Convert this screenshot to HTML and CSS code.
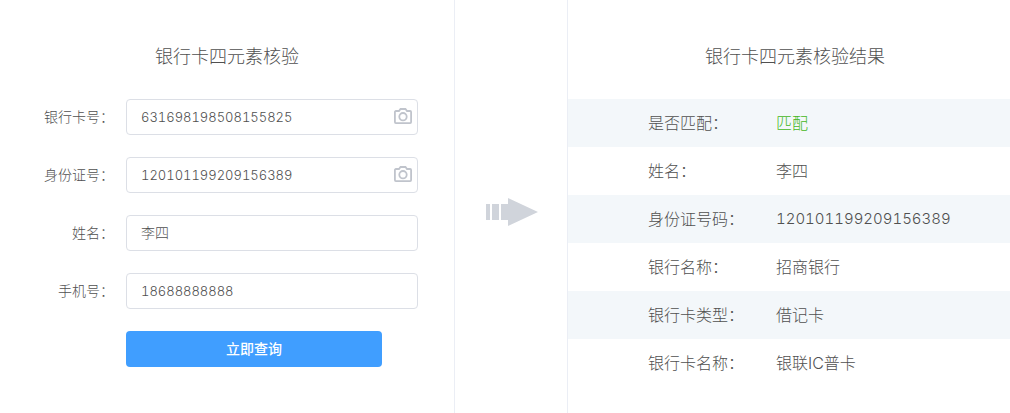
FILE: index.html
```html
<!DOCTYPE html>
<html lang="zh-CN">
<head>
<meta charset="utf-8">
<title>银行卡四元素核验</title>
<link rel="stylesheet" href="styles.css">
</head>
<body>
<main class="page">
  <form class="query">
    <h1 class="title">银行卡四元素核验</h1>
    <div class="field">
      <label class="label" for="card">银行卡号：</label>
      <div class="control">
        <input class="input number" id="card" type="text" value="631698198508155825">
        <button class="camera" type="button" aria-label="拍照识别银行卡">
          <svg viewBox="0 0 18 16" width="18" height="16" fill="none" stroke="currentColor" stroke-width="1.800"><path d="M1.900 3H5l1.500-2h5L13 3h3.100a1 1 0 0 1 1 1v10.100a1 1 0 0 1-1 1H1.900a1 1 0 0 1-1-1V4a1 1 0 0 1 1-1z"/><circle cx="9" cy="8.700" r="3.700"/></svg>
        </button>
      </div>
    </div>
    <div class="field">
      <label class="label" for="idno">身份证号：</label>
      <div class="control">
        <input class="input number" id="idno" type="text" value="120101199209156389">
        <button class="camera" type="button" aria-label="拍照识别身份证">
          <svg viewBox="0 0 18 16" width="18" height="16" fill="none" stroke="currentColor" stroke-width="1.800"><path d="M1.900 3H5l1.500-2h5L13 3h3.100a1 1 0 0 1 1 1v10.100a1 1 0 0 1-1 1H1.900a1 1 0 0 1-1-1V4a1 1 0 0 1 1-1z"/><circle cx="9" cy="8.700" r="3.700"/></svg>
        </button>
      </div>
    </div>
    <div class="field">
      <label class="label" for="name">姓名：</label>
      <div class="control"><input class="input" id="name" type="text" value="李四"></div>
    </div>
    <div class="field">
      <label class="label" for="phone">手机号：</label>
      <div class="control"><input class="input number" id="phone" type="tel" value="18688888888"></div>
    </div>
    <button class="submit" type="submit">立即查询</button>
  </form>
  <div class="flow" aria-hidden="true">
    <svg viewBox="0 0 52 28" width="52" height="28" fill="#d0d4db"><path d="M0 6h4v16H0zM6 6h7v16H6zM15 6h7V0l30 14-30 14v-6h-7z"/></svg>
  </div>
  <section class="result">
    <h2 class="title">银行卡四元素核验结果</h2>
    <table class="table">
      <tr><th scope="row">是否匹配：</th><td class="match">匹配</td></tr>
      <tr><th scope="row">姓名：</th><td>李四</td></tr>
      <tr><th scope="row">身份证号码：</th><td class="id-number">120101199209156389</td></tr>
      <tr><th scope="row">银行名称：</th><td>招商银行</td></tr>
      <tr><th scope="row">银行卡类型：</th><td>借记卡</td></tr>
      <tr><th scope="row">银行卡名称：</th><td>银联IC普卡</td></tr>
    </table>
  </section>
</main>
</body>
</html>
```
FILE: styles.css
```css
* { box-sizing: border-box; }
body {
  margin: 0;
  background: #fff;
  color: #505050;
  font-family: Inter, "Noto Sans CJK SC", sans-serif;
  font-size: 14px;
  font-weight: 300;
  font-variant-numeric: tabular-nums;
}
.page {
  display: grid;
  grid-template-columns: 455fr 112fr 443fr;
  min-height: 100vh;
}
.query {
  padding: 44px 36px 0 36px;
  border-right: 1px solid #ebeef5;
}
.title {
  margin: 0 0 29px;
  font-size: 18px;
  line-height: 26px;
  font-weight: 300;
  text-align: center;
}
.field {
  display: flex;
  align-items: center;
  gap: 12px;
  margin-bottom: 22px;
}
.label { width: 78px; padding-bottom: 2px; text-align: right; }
.control { position: relative; flex: 1; }
.input {
  display: block;
  width: 100%;
  height: 36px;
  padding: 0 14px 2px;
  border: 1px solid #dcdfe6;
  border-radius: 4px;
  background: #fff;
  color: inherit;
  font: inherit;
  font-variant-numeric: inherit;
}
.input.number { padding-bottom: 0; font-size: 13px; }
.camera {
  position: absolute;
  top: 9px;
  right: 6px;
  display: flex;
  padding: 0;
  border: 0;
  background: none;
  color: #c0c4cc;
}
.submit {
  display: block;
  width: calc(100% - 126px);
  height: 36px;
  margin-left: 90px;
  padding: 0 0 2px;
  border: 0;
  border-radius: 4px;
  background: #409eff;
  color: #fff;
  font: inherit;
  font-weight: 500;
}
.flow {
  display: flex;
  align-items: center;
  justify-content: center;
  padding: 10px 0 0 2px;
}
.result { padding-top: 44px; border-left: 1px solid #ebeef5; }
.result .title { margin-left: 12px; }
.table {
  width: 100%;
  border-collapse: collapse;
  font-size: 16px;
  line-height: 24px;
}
.table tr:nth-child(odd) { background: #f3f7fa; }
.table th, .table td {
  padding: 12px 0;
  font-weight: 300;
  text-align: left;
}
.table th { width: 208px; padding-left: 80px; }
.id-number { font-size: 15px; }
.match { color: #45b81a; }
```
